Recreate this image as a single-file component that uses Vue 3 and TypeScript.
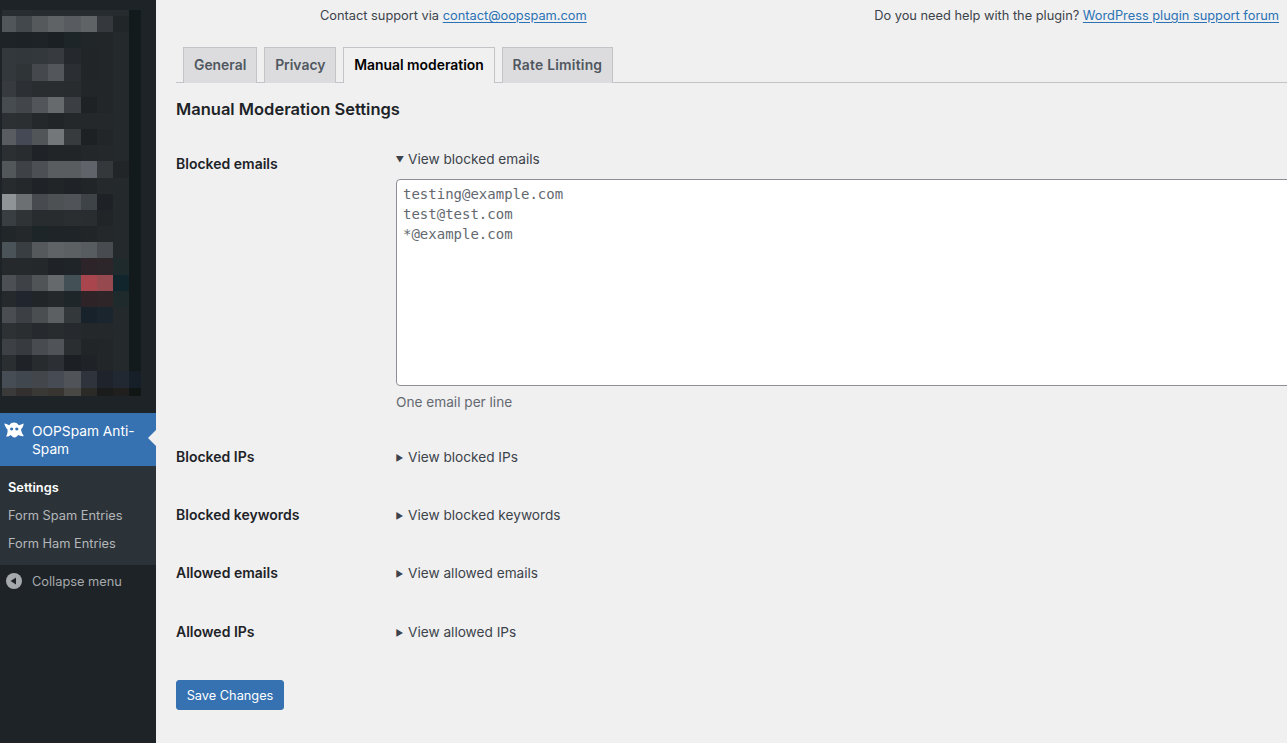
<script setup lang="ts">
const pixelRows: { h: number; c: string[] }[] = [
  { h: 6, c: ['282d32','282d32','272c30','272c30','272c30','272c30','272c30','262b2e','121a1c'] },
  ...[
    '50565a 43484c 55595c 5f6366 585c60 5f6366 35393d 212629 121a1c',
    '1e2327 1d2226 1e2327 1a2023 1d2529 212629 222629 24292c 121a1c',
    '33383c 32373b 33383c 373b40 25292d 212528 222629 24292c 121a1c',
    '33383c 2f3437 45494d 53575b 2b2f33 212528 222629 24292c 121a1c',
    '373b3f 2c3034 292d30 2a2d30 282c2f 222629 222629 24292c 121a1c',
    '474c50 42464a 525559 666a6c 3b3f43 1e2225 222629 24292c 121a1c',
    '2c3033 2b2f32 24282b 212528 24282b 24282b 24282b 24292c 121a1c',
    '595d61 454956 515558 747779 373b3e 1d2124 222629 24292c 121a1c',
    '2b2f32 282c2f 1f2327 212528 212528 23272a 24282b 24292c 121a1c',
    '52575a 3e4246 4c4f53 5a5d60 5a5d60 60646a 34383b 212528 121a1c',
    '272b2e 24282b 1f2327 212528 1f2327 212528 25292c 24292c 121a1c',
    '8f9497 6d7072 474b4f 4d5154 505458 3e4347 1e2226 24292c 121a1c',
    '393e42 2f3336 282c2f 282c2f 2a2e31 292d30 212528 24292c 121a1c',
    '212629 24282b 1e2528 1f2428 1f2428 212528 24282b 24292c 121a1c',
    '4a5357 393e42 55595c 5f6366 5c6063 565c60 484c50 24292c 121a1c',
    '25292c 25292c 24282b 1f2327 1e2427 2c2429 2c2529 1f2a2d 121a1c',
    '4c5054 3e4246 505457 66696c 435056 a8454d 964a50 10262c 121a1c',
    '25292c 20252e 212528 24282b 1f2629 2e2428 2e2528 1f2a2d 121a1c',
    '4a4e52 3c4044 4a4e51 5c6063 33383b 18222b 1a252e 24292c 121a1c',
    '2d3134 2a2e31 26292d 282c2f 26292d 24282b 24282b 24292c 121a1c',
    '3d4145 373b3f 484c50 505458 2a2e31 212528 222629 24292c 121a1c',
    '2a2e31 1f2327 272b2e 2c2f33 1c2024 1f2327 222629 24292c 121a1c',
    '474d55 41474f 43474b 474b54 505458 2f343c 1e232c 222832 161e28',
  ].map((r) => ({ h: 16.17, c: r.split(' ') })),
  { h: 8, c: ['3a3a3a','332f2e','3a3936','38342f','4a4845','2b2a27','1a1c1b','201f1e','101614'] },
]
const colWidths = [14, 16.17, 16.17, 16.17, 16.17, 16.17, 16.17, 16, 12]

const tabs = ['General', 'Privacy', 'Manual moderation', 'Rate Limiting']
const collapsedRows = [
  { label: 'Blocked IPs', summary: 'View blocked IPs' },
  { label: 'Blocked keywords', summary: 'View blocked keywords' },
  { label: 'Allowed emails', summary: 'View allowed emails' },
  { label: 'Allowed IPs', summary: 'View allowed IPs' },
]
const emails = 'testing@example.com\ntest@test.com\n*@example.com'
</script>

<template>
  <div class="page">
    <aside class="sidebar">
      <div class="pixels" aria-hidden="true">
        <div v-for="(row, i) in pixelRows" :key="i" class="pixel-row" :style="{ height: row.h + 'px' }">
          <span
            v-for="(c, j) in row.c"
            :key="j"
            :style="{ width: colWidths[j] + 'px', background: '#' + c }"
          ></span>
        </div>
      </div>
      <div class="current">
        <svg class="ghost" viewBox="0 0 20 16" width="20" height="16" aria-hidden="true">
          <path
            fill-rule="evenodd"
            fill="#fff"
            d="M0.3 1.6 C2.4 2 4 2.8 5.2 3.3 C6.5 1 8.5 0.4 10 0.4 C11.5 0.4 13.5 1 14.8 3.3 C16 2.8 18 2 19.8 1.4 C19.4 4 18.4 6 17 7.4 C17.4 9.6 18.4 12 19.8 14 C18 14.5 16 14 14.5 13 C13 14 12 15.6 10.5 15.6 C9 15.6 8 14 6.5 13 C5 14.4 3.5 14.8 2 14.4 C3.4 12.5 3.8 9.6 3.5 7.4 C2 6 0.8 4 0.3 1.6 Z M7.6 5.4 A1.6 1.6 0 1 0 7.61 5.4 Z M12.8 5.4 A1.6 1.6 0 1 0 12.81 5.4 Z"
          />
        </svg>
        <span class="current-label">OOPSpam Anti-Spam</span>
        <span class="arrow"></span>
      </div>
      <ul class="submenu">
        <li class="active">Settings</li>
        <li>Form Spam Entries</li>
        <li>Form Ham Entries</li>
      </ul>
      <div class="collapse">
        <svg viewBox="0 0 16 16" width="16" height="16" aria-hidden="true">
          <circle cx="8" cy="8" r="8" fill="#a7aaad" />
          <path d="M10 4.4 V11.6 L4.6 8 Z" fill="#1d2327" />
        </svg>
        <span>Collapse menu</span>
      </div>
    </aside>

    <main class="content">
      <div class="support">
        <p class="support-left">Contact support via <a href="#">contact@oopspam.com</a></p>
        <p class="support-right">Do you need help with the plugin? <a href="#">WordPress plugin support forum</a></p>
      </div>

      <nav class="tabs">
        <a v-for="t in tabs" :key="t" href="#" class="tab" :class="{ on: t === 'Manual moderation' }">{{ t }}</a>
      </nav>

      <h2>Manual Moderation Settings</h2>

      <section class="row first">
        <div class="label">Blocked emails</div>
        <div class="field">
          <div class="summary"><span class="tri">▼</span>View blocked emails</div>
          <textarea readonly :value="emails"></textarea>
          <p class="hint">One email per line</p>
        </div>
      </section>

      <section v-for="r in collapsedRows" :key="r.label" class="row">
        <div class="label">{{ r.label }}</div>
        <div class="field">
          <div class="summary"><span class="tri">▶</span>{{ r.summary }}</div>
        </div>
      </section>

      <button type="button" class="save">Save Changes</button>
    </main>
  </div>
</template>

<style>
html, body { margin: 0; background: #f0f0f1; overflow: hidden; }
</style>

<style scoped>
.page {
  display: flex;
  width: 1287px;
  height: 743px;
  overflow: hidden;
  background: #f0f0f1;
  font-family: Inter, "Liberation Sans", sans-serif;
  font-size: 14px;
  color: #3c434a;
}
.sidebar {
  flex: 0 0 156px;
  background: #1d2327;
  padding-top: 10px;
  box-sizing: border-box;
}
.pixels { padding-left: 2px; height: 403px; }
.pixel-row { display: flex; }
.pixel-row span { display: block; flex: none; height: 100%; }
.current {
  position: relative;
  display: flex;
  background: #3672b2;
  color: #fff;
  height: 53px;
  padding: 9px 10px 0 32px;
  box-sizing: border-box;
  line-height: 18px;
  font-size: 13.75px;
}
.ghost { position: absolute; left: 4px; top: 9px; }
.arrow {
  position: absolute;
  right: 0;
  top: 17px;
  width: 0;
  height: 0;
  border: 8px solid transparent;
  border-left-width: 0;
  border-right-color: #f0f0f1;
}
.submenu {
  list-style: none;
  margin: 0;
  padding: 8px 0 7px;
  background: #2c3338;
  font-size: 12.8px;
}
.submenu li { height: 28px; line-height: 28px; padding-left: 8px; color: #b4b7ba; }
.submenu li.active { color: #fff; font-weight: 600; }
.collapse {
  display: flex;
  align-items: center;
  gap: 10px;
  height: 32px;
  padding-left: 6px;
  font-size: 12.8px;
  color: #a7aaad;
}
.content { flex: 1; min-width: 0; padding-left: 20px; }
.support { position: relative; height: 47px; font-size: 12.8px; }
.support p { margin: 0; position: absolute; top: 7px; line-height: 18px; white-space: nowrap; color: #3c434a; }
.support-left { left: 144px; }
.support-right { right: 8px; }
.support a { color: #2b72b5; text-underline-offset: 2px; }
.tabs {
  display: flex;
  gap: 6.8px;
  padding-left: 7px;
  border-bottom: 1px solid #c3c4c7;
  height: 35px;
}
.tab {
  display: block;
  height: 36px;
  box-sizing: border-box;
  padding: 5px 10px;
  border: 1px solid #c3c4c7;
  border-bottom: 0;
  background: #dcdcde;
  color: #50575e;
  font-weight: 600;
  font-size: 13.9px;
  line-height: 24px;
  text-decoration: none;
}
.tab:last-child { letter-spacing: 0.22px; }
.tab.on { background: #f0f0f1; color: #000; }
h2 {
  margin: 15px 0 0;
  font-size: 16.5px;
  line-height: 22px;
  font-weight: 600;
  color: #1d2327;
}
.row { display: flex; margin-top: 34px; }
.row.first { margin-top: 27px; }
.row:last-of-type { margin-top: 35px; }
.label {
  flex: 0 0 220px;
  font-weight: 600;
  color: #1d2327;
  line-height: 24px;
}
.row.first .label { padding-top: 5px; }
.field { flex: 1; min-width: 0; }
.summary { line-height: 24px; height: 24px; color: #3c434a; white-space: nowrap; font-size: 13.65px; }
.tri { display: inline-block; width: 12px; font-size: 8.5px; vertical-align: 1px; position: relative; left: -0.5px; }
textarea {
  display: block;
  box-sizing: border-box;
  width: 1000px;
  height: 207px;
  margin: 8px 0 0;
  padding: 4px 6px;
  border: 1px solid #8c8f94;
  border-radius: 4px;
  background: #fff;
  font-family: "DejaVu Sans Mono", monospace;
  font-size: 14px;
  line-height: 20px;
  color: #646970;
  resize: none;
  outline: 0;
}
.hint { margin: 7px 0 0; line-height: 18px; color: #646970; font-size: 13.65px; }
.save {
  display: block;
  margin-top: 36px;
  width: 108px;
  height: 30px;
  padding: 1px 0 0;
  border: 1px solid #3672b2;
  border-radius: 3px;
  background: #3672b2;
  color: #fff;
  font-family: inherit;
  font-size: 12.75px;
}
</style>
